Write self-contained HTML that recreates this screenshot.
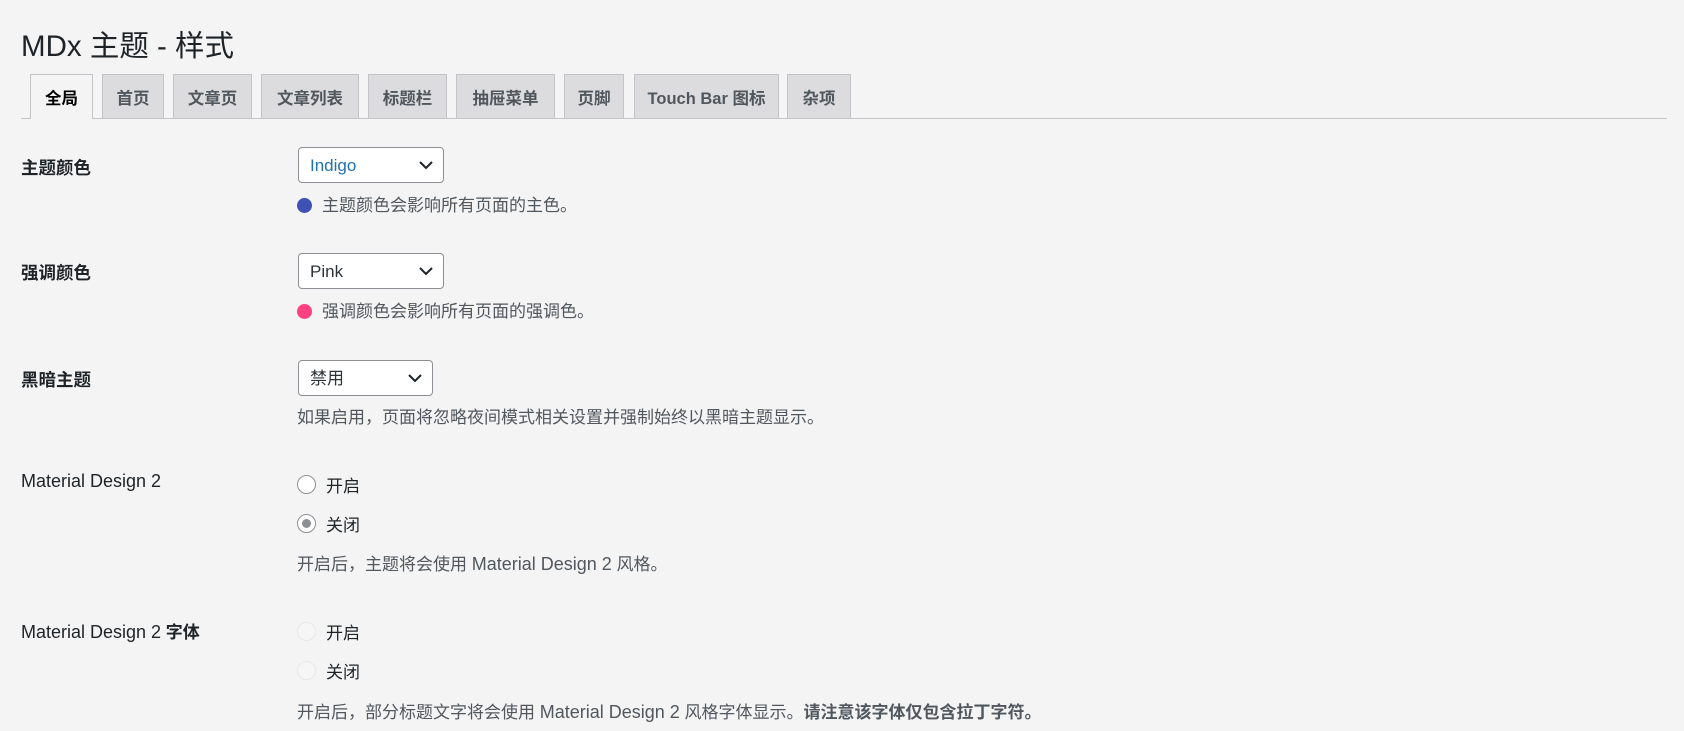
<!DOCTYPE html>
<html><head><meta charset="utf-8"><style>
*{box-sizing:border-box;margin:0;padding:0}
body{width:1684px;height:731px;background:#f4f4f4;font-family:"Liberation Sans","Noto Sans CJK SC",sans-serif;color:#1d2327;font-size:17px;position:relative;overflow:hidden}
.a{position:absolute;white-space:nowrap}
.l{font-size:18px}
h1{position:absolute;left:21px;top:23px;font-size:29.5px;font-weight:400;color:#1d2327}
.tabline{position:absolute;left:21px;right:17px;top:118px;border-top:1px solid #c3c4c7}
.tab{position:absolute;top:74px;height:44px;border:1px solid #c3c4c7;border-bottom:none;background:#dcdcde;color:#50575e;font-weight:bold;font-size:16.5px;display:flex;align-items:center;justify-content:center}
.tab.on{background:#f4f4f4;color:#000;height:45px}
.lbl{font-weight:bold;font-size:17.5px;color:#1d2327}
.sel{position:absolute;left:298px;height:36px;border:1px solid #8c8f94;border-radius:4px;background:#fff;padding-left:11px;line-height:36px;font-size:17px;color:#2c3338}
.sel svg{position:absolute;right:10px;top:13px}
.desc{color:#50575e;font-size:17px}
.dot{display:inline-block;width:15px;height:15px;border-radius:50%;vertical-align:-2px;margin-right:10px}
.rad{position:absolute;left:297px;width:19px;height:19px;border-radius:50%;border:1px solid #8c8f94;background:#fff}
.rad.dis{border-color:#e8e8e8;background:#f6f6f6}
</style></head><body>
<h1>MDx 主题 - 样式</h1>
<div class="tabline"></div>
<div class="tab on" style="left:30px;width:63px">全局</div>
<div class="tab" style="left:102px;width:62px">首页</div>
<div class="tab" style="left:173px;width:79px">文章页</div>
<div class="tab" style="left:261px;width:98px">文章列表</div>
<div class="tab" style="left:368px;width:79px">标题栏</div>
<div class="tab" style="left:456px;width:99px">抽屉菜单</div>
<div class="tab" style="left:564px;width:60px">页脚</div>
<div class="tab" style="left:634px;width:145px">Touch Bar 图标</div>
<div class="tab" style="left:787px;width:64px">杂项</div>

<div class="a lbl" style="left:21px;top:155px">主题颜色</div>
<div class="sel" style="top:147px;width:146px;color:#2271b1">Indigo<svg width="14" height="9" viewBox="0 0 14 9"><path d="M1 1l6 6 6-6" fill="none" stroke="#1d2327" stroke-width="2"/></svg></div>
<div class="a desc" style="left:297px;top:191px"><span class="dot" style="background:#3f51b5"></span>主题颜色会影响所有页面的主色。</div>

<div class="a lbl" style="left:21px;top:260px">强调颜色</div>
<div class="sel" style="top:253px;width:146px">Pink<svg width="14" height="9" viewBox="0 0 14 9"><path d="M1 1l6 6 6-6" fill="none" stroke="#1d2327" stroke-width="2"/></svg></div>
<div class="a desc" style="left:297px;top:297px"><span class="dot" style="background:#ff4081"></span>强调颜色会影响所有页面的强调色。</div>

<div class="a lbl" style="left:21px;top:367px">黑暗主题</div>
<div class="sel" style="top:360px;width:135px">禁用<svg width="14" height="9" viewBox="0 0 14 9"><path d="M1 1l6 6 6-6" fill="none" stroke="#1d2327" stroke-width="2"/></svg></div>
<div class="a desc" style="left:297px;top:403px">如果启用，页面将忽略夜间模式相关设置并强制始终以黑暗主题显示。</div>

<div class="a l" style="left:21px;top:471px">Material Design 2</div>
<div class="rad" style="top:475px"></div><div class="a" style="left:326px;top:472px">开启</div>
<div class="rad" style="top:514px"><div style="position:absolute;left:4px;top:4px;width:9px;height:9px;border-radius:50%;background:#8c8f94"></div></div><div class="a" style="left:326px;top:511px">关闭</div>
<div class="a desc" style="left:297px;top:550px">开启后，主题将会使用 <span class="l">Material Design 2</span> 风格。</div>

<div class="a" style="left:21px;top:618px"><span class="l">Material Design 2</span> <b>字体</b></div>
<div class="rad dis" style="top:622px"></div><div class="a" style="left:326px;top:619px">开启</div>
<div class="rad dis" style="top:661px"></div><div class="a" style="left:326px;top:658px">关闭</div>
<div class="a desc" style="left:297px;top:698px">开启后，部分标题文字将会使用 <span class="l">Material Design 2</span> 风格字体显示。<b>请注意该字体仅包含拉丁字符。</b></div>
</body></html>
